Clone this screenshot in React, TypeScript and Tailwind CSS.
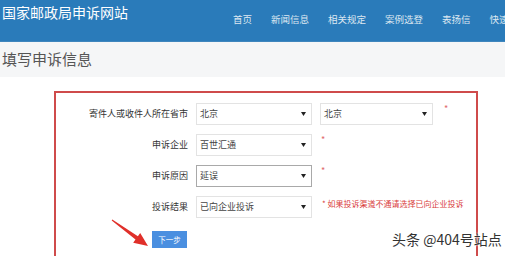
import React from "react";

const font = { fontFamily: '"Noto Sans CJK SC", "Noto Sans", sans-serif' };

function Sel({ value, w, focus }: { value: string; w: string; focus?: boolean }) {
  return (
    <div
      className={`${w} h-[22px] bg-white border ${focus ? "border-[#a9a9a9]" : "border-[#e3e3e3]"} flex items-center justify-between pl-[3px] pr-[5px] text-[9px] text-[#444]`}
    >
      <span>{value}</span>
      <svg width="5" height="4" viewBox="0 0 5 4">
        <polygon points="0,0 5,0 2.5,4" fill="#222" />
      </svg>
    </div>
  );
}

function Star({ ml = "ml-[9px]" }: { ml?: string }) {
  return <span className={`${ml} self-start mt-[1px] text-[9px] text-[#e06a6a] leading-none`}>*</span>;
}

export default function App() {
  const nav = ["首页", "新闻信息", "相关规定", "案例选登", "表扬信", "快速通道"];
  return (
    <div className="relative w-[505px] h-[256px] overflow-hidden bg-white" style={font}>
      <div className="h-[41px] bg-[#2a7bba] flex items-start whitespace-nowrap overflow-hidden">
        <div className="w-[233px] shrink-0 pl-[2px] pt-[3px] text-[14px] leading-[18px] text-white">
          国家邮政局申诉网站
        </div>
        <div className="flex gap-[19px] pt-[13px] text-[9.5px] leading-[13px] text-[#dce7f1]">
          {nav.map((n) => (
            <span key={n}>{n}</span>
          ))}
        </div>
      </div>
      <div className="h-[36px] bg-[#f5f6f7] border-t border-[#3f86bd] flex items-center pl-[2px] text-[15px] text-[#555]">
        填写申诉信息
      </div>
      <div className="pl-[54px] pt-[14px]">
        <div className="w-[424px] h-[200px] border-2 border-[#cf4b4b] pt-[10px] flex flex-col gap-[9px]">
          <div className="flex items-center h-[22px]">
            <div className="w-[132px] pr-[0px] text-right text-[9px] text-[#333]">寄件人或收件人所在省市</div>
            <div className="ml-[8px]">
              <Sel value="北京" w="w-[116px]" />
            </div>
            <div className="ml-[8px]">
              <Sel value="北京" w="w-[113px]" />
            </div>
            <Star ml="ml-[11px]" />
          </div>
          <div className="flex items-center h-[22px]">
            <div className="w-[132px] text-right text-[9px] text-[#333]">申诉企业</div>
            <div className="ml-[8px]">
              <Sel value="百世汇通" w="w-[116px]" />
            </div>
            <Star />
          </div>
          <div className="flex items-center h-[22px]">
            <div className="w-[132px] text-right text-[9px] text-[#333]">申诉原因</div>
            <div className="ml-[8px]">
              <Sel value="延误" w="w-[116px]" focus />
            </div>
            <Star />
          </div>
          <div className="flex items-center h-[22px]">
            <div className="w-[132px] text-right text-[9px] text-[#333]">投诉结果</div>
            <div className="ml-[8px]">
              <Sel value="已向企业投诉" w="w-[116px]" />
            </div>
            <span className="ml-[10px] self-start mt-[2px] text-[8px] text-[#d9403c] whitespace-nowrap">
              * 如果投诉渠道不通请选择已向企业投诉
            </span>
          </div>
          <div className="mt-[4px] ml-[96px]">
            <div className="w-[35px] h-[17px] bg-[#4a8fe0] flex items-center justify-center text-[7.5px] text-white">
              下一步
            </div>
          </div>
        </div>
      </div>
      <svg className="absolute left-0 top-0 pointer-events-none" width="505" height="256">
        <polygon
          points="112.3,219.6 137.9,236.2 140.2,232.9 148,246 133.2,242.7 135.5,239.4 111.7,220.4"
          fill="#e0302a"
        />
      </svg>
      <div
        className="absolute left-[392px] top-[230px] text-[14px] leading-[18px] text-[#333] whitespace-nowrap"
        style={{ textShadow: "0 0 2px #fff, 0 0 2px #fff" }}
      >
        头条 @404号站点
      </div>
    </div>
  );
}
